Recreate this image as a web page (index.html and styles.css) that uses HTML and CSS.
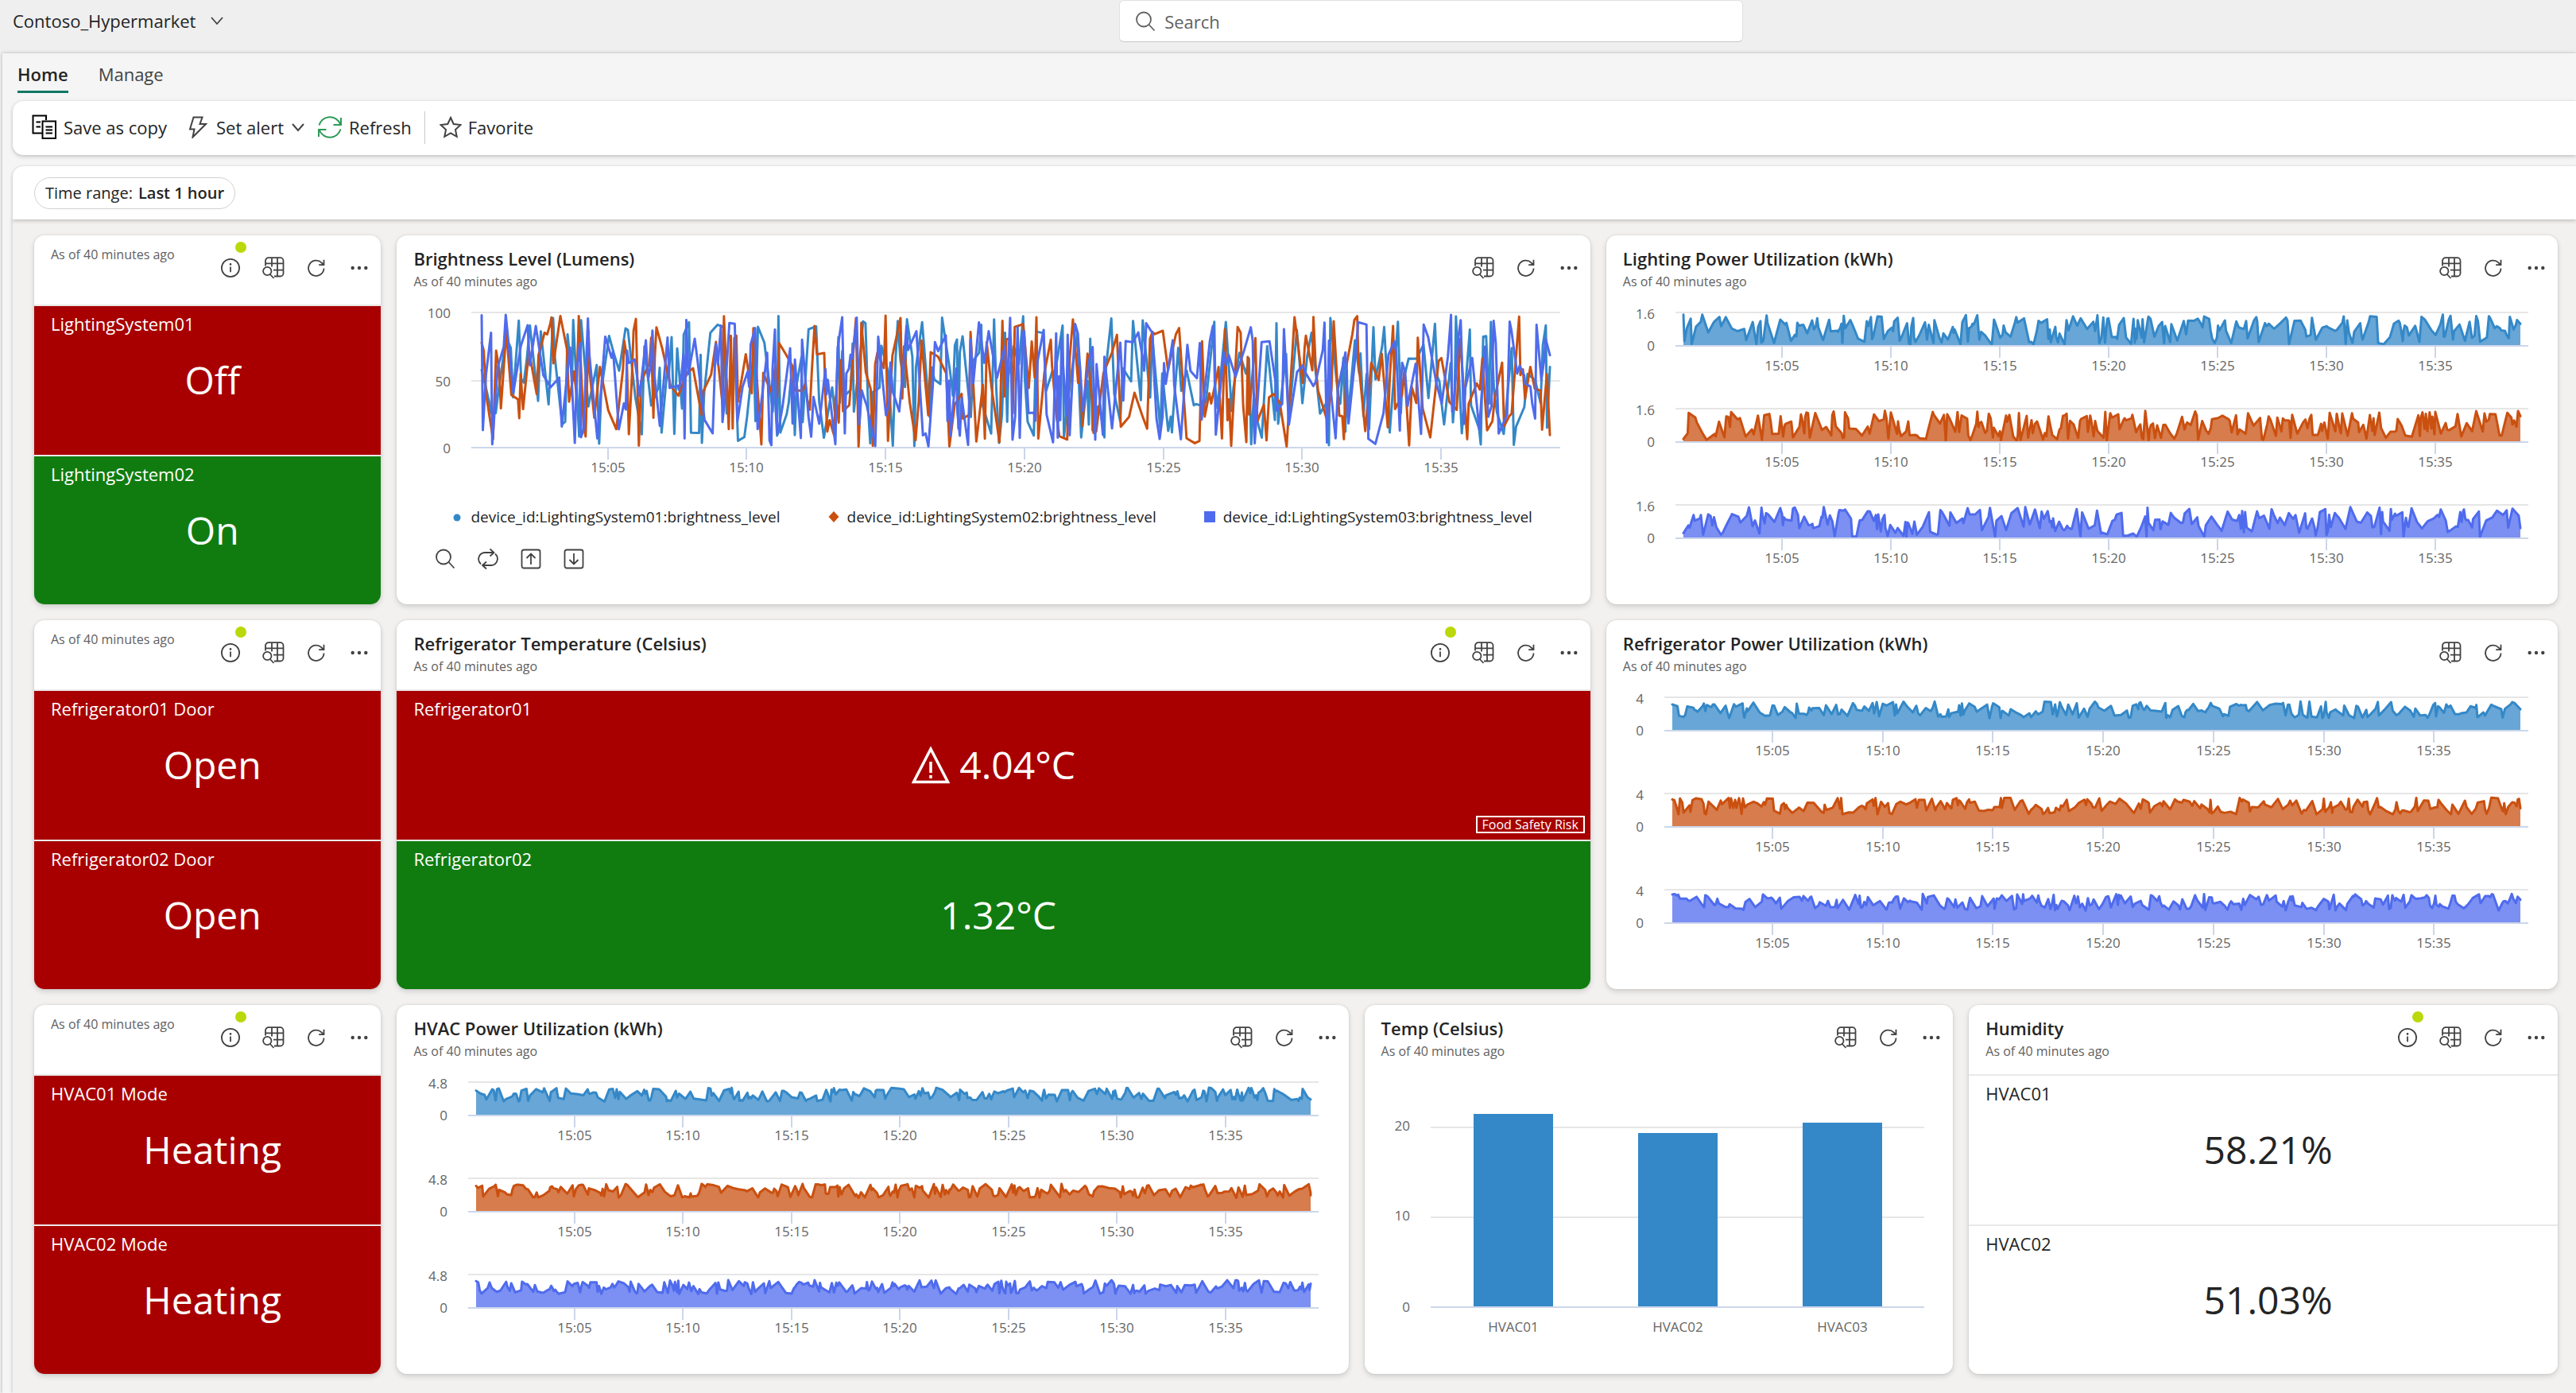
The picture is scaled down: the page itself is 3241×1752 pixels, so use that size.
FILE: index.html
```html
<!DOCTYPE html>
<html lang="en">
<head>
<meta charset="utf-8">
<meta name="viewport" content="width=device-width, initial-scale=1">
<title>Contoso_Hypermarket</title>
<link rel="stylesheet" href="styles.css">
</head>
<body>
<svg class="sprite" aria-hidden="true">
  <symbol id="i-info" viewBox="0 0 28 28"><circle cx="14" cy="14" r="11.1"/><path d="M14 12.6v6.6"/><circle class="solid" cx="14" cy="9.4" r="1.3"/></symbol>
  <symbol id="i-explore" viewBox="0 0 28 28"><path d="M4 11.5V5a3.8 3.8 0 0 1 3.8-3.8h14.9A3.8 3.8 0 0 1 26.5 5v15.700a3.800 3.800 0 0 1-3.800 3.800H15M12 1.200V12.500M19 1.200V24.500M4 8.300H26.500M14 16.700H26.500M9.800 22l4.700 5"/><circle cx="6.300" cy="18" r="5.200"/></symbol>
  <symbol id="i-reload" viewBox="0 0 28 28"><path d="M23.500 14.500a9.700 9.700 0 1 1-3-7.200l2.700 2.700M23.500 3.800V10.200H17.200"/></symbol>
  <symbol id="i-more" viewBox="0 0 28 28"><g class="solid"><circle cx="5.700" cy="14" r="2.200"/><circle cx="14" cy="14" r="2.200"/><circle cx="22.300" cy="14" r="2.200"/></g></symbol>
  <symbol id="i-search" viewBox="0 0 28 28"><circle cx="12" cy="11.500" r="9"/><path d="M18.500 18l7 7.500"/></symbol>
  <symbol id="i-loop" viewBox="0 0 28 28"><path d="M5 20.500A8.300 8.300 0 0 1 9.500 6H21M16.500 1.500L21.500 6l-5 4.500M23 7.500A8.300 8.300 0 0 1 18.500 22H7.500M12 17.500L7 22l5 4.500"/></symbol>
  <symbol id="i-up" viewBox="0 0 28 28"><rect x="2.500" y="2.500" width="23" height="23" rx="2.500"/><path d="M14 21V8M8.500 13L14 7.500 19.500 13"/></symbol>
  <symbol id="i-down" viewBox="0 0 28 28"><rect x="2.500" y="2.500" width="23" height="23" rx="2.500"/><path d="M14 7v13M8.500 15l5.500 5.500 5.500-5.500"/></symbol>
  <symbol id="i-chevron" viewBox="0 0 16 16"><path d="M1 4l7 8 7-8"/></symbol>
  <symbol id="i-copy" viewBox="0 0 32 32"><path d="M12.500 23.500H1.500V1.500H18V7M5.500 9.500h5.500M5.500 15.500h5.500M13.500 8.500H30V30H13.500zM17.500 15.500h8.500M17.500 19.500h8.500M17.500 23.500h8.500"/></symbol>
  <symbol id="i-bolt" viewBox="0 0 28 28"><path d="M9.500 1.500h11l-3 8.500h7.500L8.500 26.500l2-10H5z"/></symbol>
  <symbol id="i-sync" viewBox="0 0 32 32"><path d="M2.500 13.500a14 14 0 0 1 26.500-1.500M30 4v9H20.500M29.500 18.500a14 14 0 0 1-26.500 1.500M2 28v-9h9.500"/></symbol>
  <symbol id="i-star" viewBox="0 0 28 28"><path d="M14 2l3.700 8 8.800 1.100-6.500 6 1.700 8.700L14 21.500l-7.700 4.300L8 17.100l-6.500-6L10.300 10z"/></symbol>
  <symbol id="i-warn" viewBox="0 0 48 48"><path d="M24 4L45.500 45.500H2.500zM24 20v14"/><path d="M24 37v4"/></symbol>
</svg>

<header class="topbar">
  <button class="workspace" type="button">Contoso_Hypermarket <svg class="icon icon--chevron"><use href="#i-chevron"/></svg></button>
  <label class="search">
    <svg class="icon icon--soft"><use href="#i-search"/></svg>
    <input type="search" placeholder="Search" aria-label="Search">
  </label>
</header>

<main class="panel">
  <nav class="tabs">
    <a class="tab tab--active" href="#home" aria-current="page">Home</a>
    <a class="tab" href="#manage">Manage</a>
  </nav>

  <div class="ribbon">
    <button class="command" type="button"><svg class="icon icon--copy"><use href="#i-copy"/></svg>Save as copy</button>
    <button class="command command--alert" type="button"><svg class="icon"><use href="#i-bolt"/></svg>Set alert<svg class="icon icon--chevron"><use href="#i-chevron"/></svg></button>
    <button class="command" type="button"><svg class="icon icon--sync"><use href="#i-sync"/></svg>Refresh</button>
    <span class="divider"></span>
    <button class="command" type="button"><svg class="icon"><use href="#i-star"/></svg>Favorite</button>
  </div>

  <div class="filters">
    <button class="pill" type="button">Time range: <strong>Last 1 hour</strong></button>
  </div>

  <div class="board">
    <section class="card span-3">
      <header class="card-head card-head--plain" data-actions="info">
        <div class="card-text"><p class="stamp">As of 40 minutes ago</p></div>
      </header>
      <div class="tiles">
        <div class="tile tile--red"><h3>LightingSystem01</h3><p class="value"><span>Off</span></p></div>
        <div class="tile tile--green"><h3>LightingSystem02</h3><p class="value"><span>On</span></p></div>
      </div>
    </section>

    <section class="card span-10">
      <header class="card-head">
        <div class="card-text"><h2>Brightness Level (Lumens)</h2><p class="stamp">As of 40 minutes ago</p></div>
      </header>
      <div class="chart" data-kind="lines" data-left="94"></div>
      <ul class="legend">
        <li><svg class="marker" viewBox="0 0 14 14"><circle cx="7" cy="8" r="4.500" fill="#3488c8"/></svg>device_id:LightingSystem01:brightness_level</li>
        <li><svg class="marker" viewBox="0 0 14 14"><path d="M7 0l6.500 7L7 14 .5 7z" fill="#ca5010"/></svg>device_id:LightingSystem02:brightness_level</li>
        <li><svg class="marker" viewBox="0 0 14 14"><path d="M0 0h14v14H0z" fill="#4f6bed"/></svg>device_id:LightingSystem03:brightness_level</li>
      </ul>
      <div class="legend-tools">
        <button type="button" aria-label="Search legend"><svg class="icon"><use href="#i-search"/></svg></button>
        <button type="button" aria-label="Invert selection"><svg class="icon"><use href="#i-loop"/></svg></button>
        <button type="button" aria-label="Previous series"><svg class="icon"><use href="#i-up"/></svg></button>
        <button type="button" aria-label="Next series"><svg class="icon"><use href="#i-down"/></svg></button>
      </div>
    </section>

    <section class="card span-8">
      <header class="card-head">
        <div class="card-text"><h2>Lighting Power Utilization (kWh)</h2><p class="stamp">As of 40 minutes ago</p></div>
      </header>
      <div class="chart" data-kind="areas" data-left="87" data-top="1.6" data-low="0.05" data-high="1.5" data-seed="11"></div>
    </section>

    <section class="card span-3">
      <header class="card-head card-head--plain" data-actions="info">
        <div class="card-text"><p class="stamp">As of 40 minutes ago</p></div>
      </header>
      <div class="tiles">
        <div class="tile tile--red"><h3>Refrigerator01 Door</h3><p class="value"><span>Open</span></p></div>
        <div class="tile tile--red"><h3>Refrigerator02 Door</h3><p class="value"><span>Open</span></p></div>
      </div>
    </section>

    <section class="card span-10">
      <header class="card-head" data-actions="info">
        <div class="card-text"><h2>Refrigerator Temperature (Celsius)</h2><p class="stamp">As of 40 minutes ago</p></div>
      </header>
      <div class="tiles">
        <div class="tile tile--red"><h3>Refrigerator01</h3><p class="value"><svg class="icon icon--warn"><use href="#i-warn"/></svg><span>4.04°C</span></p><p class="badge">Food Safety Risk</p></div>
        <div class="tile tile--green"><h3>Refrigerator02</h3><p class="value"><span>1.32°C</span></p></div>
      </div>
    </section>

    <section class="card span-8">
      <header class="card-head">
        <div class="card-text"><h2>Refrigerator Power Utilization (kWh)</h2><p class="stamp">As of 40 minutes ago</p></div>
      </header>
      <div class="chart" data-kind="areas" data-left="73" data-top="4" data-low="1.5" data-high="3.5" data-seed="23"></div>
    </section>

    <section class="card span-3">
      <header class="card-head card-head--plain" data-actions="info">
        <div class="card-text"><p class="stamp">As of 40 minutes ago</p></div>
      </header>
      <div class="tiles">
        <div class="tile tile--red"><h3>HVAC01 Mode</h3><p class="value"><span>Heating</span></p></div>
        <div class="tile tile--red"><h3>HVAC02 Mode</h3><p class="value"><span>Heating</span></p></div>
      </div>
    </section>

    <section class="card span-8">
      <header class="card-head">
        <div class="card-text"><h2>HVAC Power Utilization (kWh)</h2><p class="stamp">As of 40 minutes ago</p></div>
      </header>
      <div class="chart" data-kind="areas" data-left="90" data-top="4.8" data-low="2" data-high="4" data-seed="37"></div>
    </section>

    <section class="card span-5">
      <header class="card-head">
        <div class="card-text"><h2>Temp (Celsius)</h2><p class="stamp">As of 40 minutes ago</p></div>
      </header>
      <div class="chart" data-kind="bars" data-left="83"></div>
    </section>

    <section class="card span-5">
      <header class="card-head" data-actions="info">
        <div class="card-text"><h2>Humidity</h2><p class="stamp">As of 40 minutes ago</p></div>
      </header>
      <div class="tiles">
        <div class="tile"><h3>HVAC01</h3><p class="value"><span>58.21%</span></p></div>
        <div class="tile"><h3>HVAC02</h3><p class="value"><span>51.03%</span></p></div>
      </div>
    </section>
  </div>
</main>
<script src="script.js"></script>
</body>
</html>
```
FILE: styles.css
```css
* { box-sizing: border-box; }

body {
  margin: 0;
  min-height: 100vh;
  display: flex;
  flex-direction: column;
  background: #efefef;
  color: #242424;
  font-family: "Open Sans", "Noto Sans", sans-serif;
  font-size: 22px;
  line-height: 30px;
}

h2, h3, p, ul { margin: 0; padding: 0; font-size: inherit; font-weight: 400; }
a { color: inherit; text-decoration: none; }
button {
  display: flex;
  align-items: center;
  padding: 0;
  border: 0;
  background: none;
  color: inherit;
  font: inherit;
  cursor: pointer;
}

.sprite { position: absolute; width: 0; height: 0; }
.icon {
  display: block;
  flex: none;
  width: 28px;
  height: 28px;
  fill: none;
  stroke: #424242;
  stroke-width: 1.8;
}
.solid { fill: #424242; stroke: none; }
.icon--chevron { width: 16px; height: 16px; }
.icon--soft { stroke: #616161; }
.icon--copy { width: 32px; height: 32px; stroke: #000; stroke-width: 2; }
.command .icon--sync { width: 32px; height: 32px; stroke: #2f9a58; }
.icon--warn { width: 48px; height: 48px; stroke: #fff; stroke-width: 3.5; }

/* Top bar */
.topbar { display: flex; height: 67px; align-items: flex-start; }
.workspace { flex: 0 0 43.45%; gap: 19px; height: 52px; padding-left: 16px; }
.search {
  display: flex;
  align-items: center;
  gap: 8px;
  width: 785px;
  height: 53px;
  padding-left: 18px;
  border: 1px solid #e0e0e0;
  border-bottom-color: #c8c8c8;
  border-radius: 6px;
  background: #fff;
}
.search input {
  flex: 1;
  border: 0;
  outline: 0;
  background: none;
  color: #242424;
  font: inherit;
}
.search input::placeholder { color: #616161; opacity: 1; }

/* Panel */
.panel {
  flex: 1;
  display: flex;
  flex-direction: column;
  margin-left: 3px;
  padding-left: 13px;
  background: #f5f5f5;
  box-shadow: 0 0 4px rgba(0, 0, 0, .26);
}
.tabs { display: flex; gap: 38px; height: 60px; padding: 11px 0 0 6px; }
.tab { height: 39px; color: #424242; }
.tab--active { border-bottom: 3px solid #117865; color: #242424; font-weight: 600; }

.ribbon, .filters {
  display: flex;
  align-items: center;
  background: #fff;
  box-shadow: 0 2px 5px rgba(0, 0, 0, .18), 0 0 3px rgba(0, 0, 0, .1);
}
.ribbon {
  height: 68px;
  margin-bottom: 14px;
  padding: 0 0 2px 24px;
  border-radius: 13px 0 0 13px;
}
.command { gap: 8px; margin-right: 24px; }
.command .icon { stroke-width: 2; }
.command--alert { gap: 10px; margin-right: 16px; }
.divider { width: 1px; height: 41px; margin: 0 18px 0 -8px; background: #c8c8c8; }
.filters { position: relative; height: 67px; padding-left: 27px; border-radius: 13px 0 0 0; }
.pill {
  gap: 7px;
  height: 40px;
  padding: 0 13px;
  border: 1px solid #d1d1d1;
  border-radius: 20px;
  font-size: 20px;
}
.pill strong { font-weight: 600; }

/* Board */
.board {
  flex: 1;
  display: grid;
  grid-template-columns: repeat(21, minmax(0, 1fr));
  grid-auto-rows: minmax(464px, max-content);
  gap: 20px;
  padding: 20px 23px 24px 27px;
  background: #f2f1f0;
  box-shadow: -1px 0 4px rgba(0, 0, 0, .16);
}
.span-3 { grid-column: span 3; }
.span-5 { grid-column: span 5; }
.span-8 { grid-column: span 8; }
.span-10 { grid-column: span 10; }

.card {
  display: flex;
  flex-direction: column;
  overflow: hidden;
  border-radius: 13px;
  background: #fff;
  box-shadow: 0 3px 7px rgba(0, 0, 0, .14), 0 0 3px rgba(0, 0, 0, .1);
}
.card-head {
  display: flex;
  justify-content: space-between;
  align-items: flex-start;
  height: 87px;
  padding: 14px 0 0 21px;
}
.card-head--plain { padding-top: 10px; }
.card-head--plain .card-actions { margin-top: 4px; }
.card-head h2 { font-weight: 600; white-space: nowrap; }
.stamp { color: #616161; font-size: 16px; line-height: 28px; white-space: nowrap; }
.card-actions { display: flex; }
.card-actions button { position: relative; width: 54px; height: 54px; justify-content: center; }
.dot {
  position: absolute;
  top: -6px;
  right: 7px;
  width: 14px;
  height: 14px;
  border-radius: 50%;
  background: #bad80a;
}

.tiles {
  flex: 1;
  display: flex;
  flex-direction: column;
  gap: 2px;
  padding-top: 2px;
  background: #e9e9e9;
}
.tile {
  flex: 1;
  display: grid;
  grid-template-rows: 1fr auto 1fr;
  background: #fff;
}
.tile--red { background: #a80000; color: #fff; }
.tile--green { background: #107c10; color: #fff; }
.tile h3 { padding: 7px 21px 0; }
.value {
  display: flex;
  align-items: center;
  justify-content: center;
  font-size: 48px;
  line-height: 68px;
}
.value span { margin-left: 12px; }
.badge {
  align-self: end;
  justify-self: end;
  margin: 0 7px 8px 0;
  padding: 0 6px;
  border: 2px solid #fff;
  font-size: 16px;
  line-height: 18px;
}

/* Charts: the first axis label stands a little above the plot, beside the end of the card head */
.chart { margin-top: -2px; }
.chart svg { display: block; width: 100%; overflow: visible; }
.chart text { fill: #666; font-size: 17px; }
.chart .end { text-anchor: end; }
.chart .mid { text-anchor: middle; }
.grid { stroke: #e6e6e6; stroke-width: 2; }
.axis { stroke: #ccd6eb; stroke-width: 2; }
.series { fill: none; stroke-width: 3; stroke-linejoin: round; stroke-linecap: round; }

.legend {
  display: flex;
  gap: 60px;
  padding: 13px 0 0 69px;
  list-style: none;
  font-size: 19px;
  line-height: 28px;
  white-space: nowrap;
}
.legend li { display: flex; align-items: center; gap: 10px; }
.marker { width: 14px; height: 14px; }
.legend-tools { display: flex; padding: 19px 0 0 34px; }
.legend-tools button { width: 54px; height: 40px; justify-content: center; }
```
FILE: script.js
```js
const COLORS = ["#3488c8", "#ca5010", "#4f6bed"];
const MINUTES = 38.46;
const FIRST_TICK = 4.54;
const RIGHT = 37;
const PLOT_TOP = 12;

// Small deterministic generator, so that the sample readings stay the same on every load.
function generator(seed) {
  let s = seed;
  return () => {
    s = (s * 1664525 + 1013904223) % 4294967296;
    return s / 4294967296;
  };
}

// Devices report in short bursts with longer pauses between them.
function readings(seed, low, high) {
  const next = generator(seed * 7919);
  const points = [];
  let t = 0;
  while (t < 1) {
    points.push([t, low + (high - low) * next()]);
    t += next() < 0.6 ? 0.001 + 0.002 * next() : 0.004 + 0.004 * next();
  }
  points.push([1, low + (high - low) * next()]);
  return points;
}

const line = (cls, x1, y1, x2, y2) =>
  `<line class="${cls}" x1="${x1}" y1="${y1}" x2="${x2}" y2="${y2}"/>`;
const text = (cls, x, y, value) => `<text class="${cls}" x="${x}" y="${y}">${value}</text>`;

function timeAxis(left, right, inset, y) {
  const start = left + inset;
  const perMinute = (right - inset - start) / MINUTES;
  let out = line("axis", left, y, right, y);
  for (let i = 0; i < 7; i++) {
    const x = Math.round(start + (FIRST_TICK + i * 5) * perMinute);
    out += line("axis", x, y, x, y + 15);
    out += text("mid", x, y + 31, "15:" + String(5 + i * 5).padStart(2, "0"));
  }
  return out;
}

function path(points, left, right, base, height, max) {
  return points
    .map(([t, v]) => `${(left + t * (right - left)).toFixed(1)},${(base - (v / max) * height).toFixed(1)}`)
    .join("L");
}

function drawAreas(el, width) {
  const left = +el.dataset.left;
  const right = width - RIGHT;
  const base = PLOT_TOP + 42;
  const { top, low, high, seed } = el.dataset;
  el.innerHTML = COLORS.map((color, i) => {
    const d = path(readings(+seed + i, +low, +high), left + 10, right - 10, base, 42, +top);
    return `<svg height="121">${line("grid", left, PLOT_TOP, right, PLOT_TOP)}
      <path d="M${left + 10},${base}L${d}L${right - 10},${base}Z" fill="${color}" fill-opacity=".75"/>
      <path class="series" d="M${d}" stroke="${color}"/>
      ${timeAxis(left, right, 10, base)}
      ${text("end", left - 26, PLOT_TOP + 8, top)}${text("end", left - 26, base + 6, 0)}</svg>`;
  }).join("");
}

function drawLines(el, width) {
  const left = +el.dataset.left;
  const right = width - RIGHT;
  const base = PLOT_TOP + 170;
  let out = "";
  [[100, PLOT_TOP], [50, PLOT_TOP + 86], [0, base]].forEach(([v, y]) => {
    if (v) out += line("grid", left, y, right, y);
    out += text("end", left - 26, y + 7, v);
  });
  out += timeAxis(left, right, 13, base);
  COLORS.forEach((color, i) => {
    const d = path(readings(5 + i * 3, 0, 99), left + 13, right - 13, base - 1, 168, 100);
    out += `<path class="series" d="M${d}" stroke="${color}"/>`;
  });
  el.innerHTML = `<svg height="242">${out}</svg>`;
}

function drawBars(el, width) {
  const left = +el.dataset.left;
  const right = width - RIGHT;
  const base = 295;
  const unit = 11.3;
  const slot = (right - left) / 3;
  let out = "";
  [20, 10, 0].forEach((v) => {
    const y = Math.round(base - v * unit);
    if (v) out += line("grid", left, y, right, y);
    out += text("end", left - 26, y + (v ? 4 : 6), v);
  });
  [["HVAC01", 21.5], ["HVAC02", 19.4], ["HVAC03", 20.5]].forEach(([name, v], i) => {
    const x = Math.round(left + slot * (i + 0.5));
    const h = Math.round(v * unit);
    out += `<rect x="${x - 50}" y="${base - h}" width="100" height="${h}" fill="#3488c8"/>`;
    out += text("mid", x, base + 31, name);
  });
  out += line("axis", left, base, right, base);
  el.innerHTML = `<svg height="340">${out}</svg>`;
}

const DRAW = { areas: drawAreas, lines: drawLines, bars: drawBars };

function drawCharts() {
  document.querySelectorAll(".chart").forEach((el) => DRAW[el.dataset.kind](el, el.clientWidth));
}

const ACTIONS = [["info", "Information"], ["explore", "Explore data"], ["reload", "Refresh"], ["more", "More options"]];

document.querySelectorAll(".card-head").forEach((head) => {
  const group = document.createElement("div");
  group.className = "card-actions";
  ACTIONS.forEach(([icon, label]) => {
    if (icon === "info" && head.dataset.actions !== "info") return;
    group.innerHTML += `<button type="button" aria-label="${label}"><svg class="icon"><use href="#i-${icon}"/></svg>${icon === "info" ? '<span class="dot"></span>' : ""}</button>`;
  });
  head.append(group);
});

drawCharts();
addEventListener("resize", drawCharts);
```
